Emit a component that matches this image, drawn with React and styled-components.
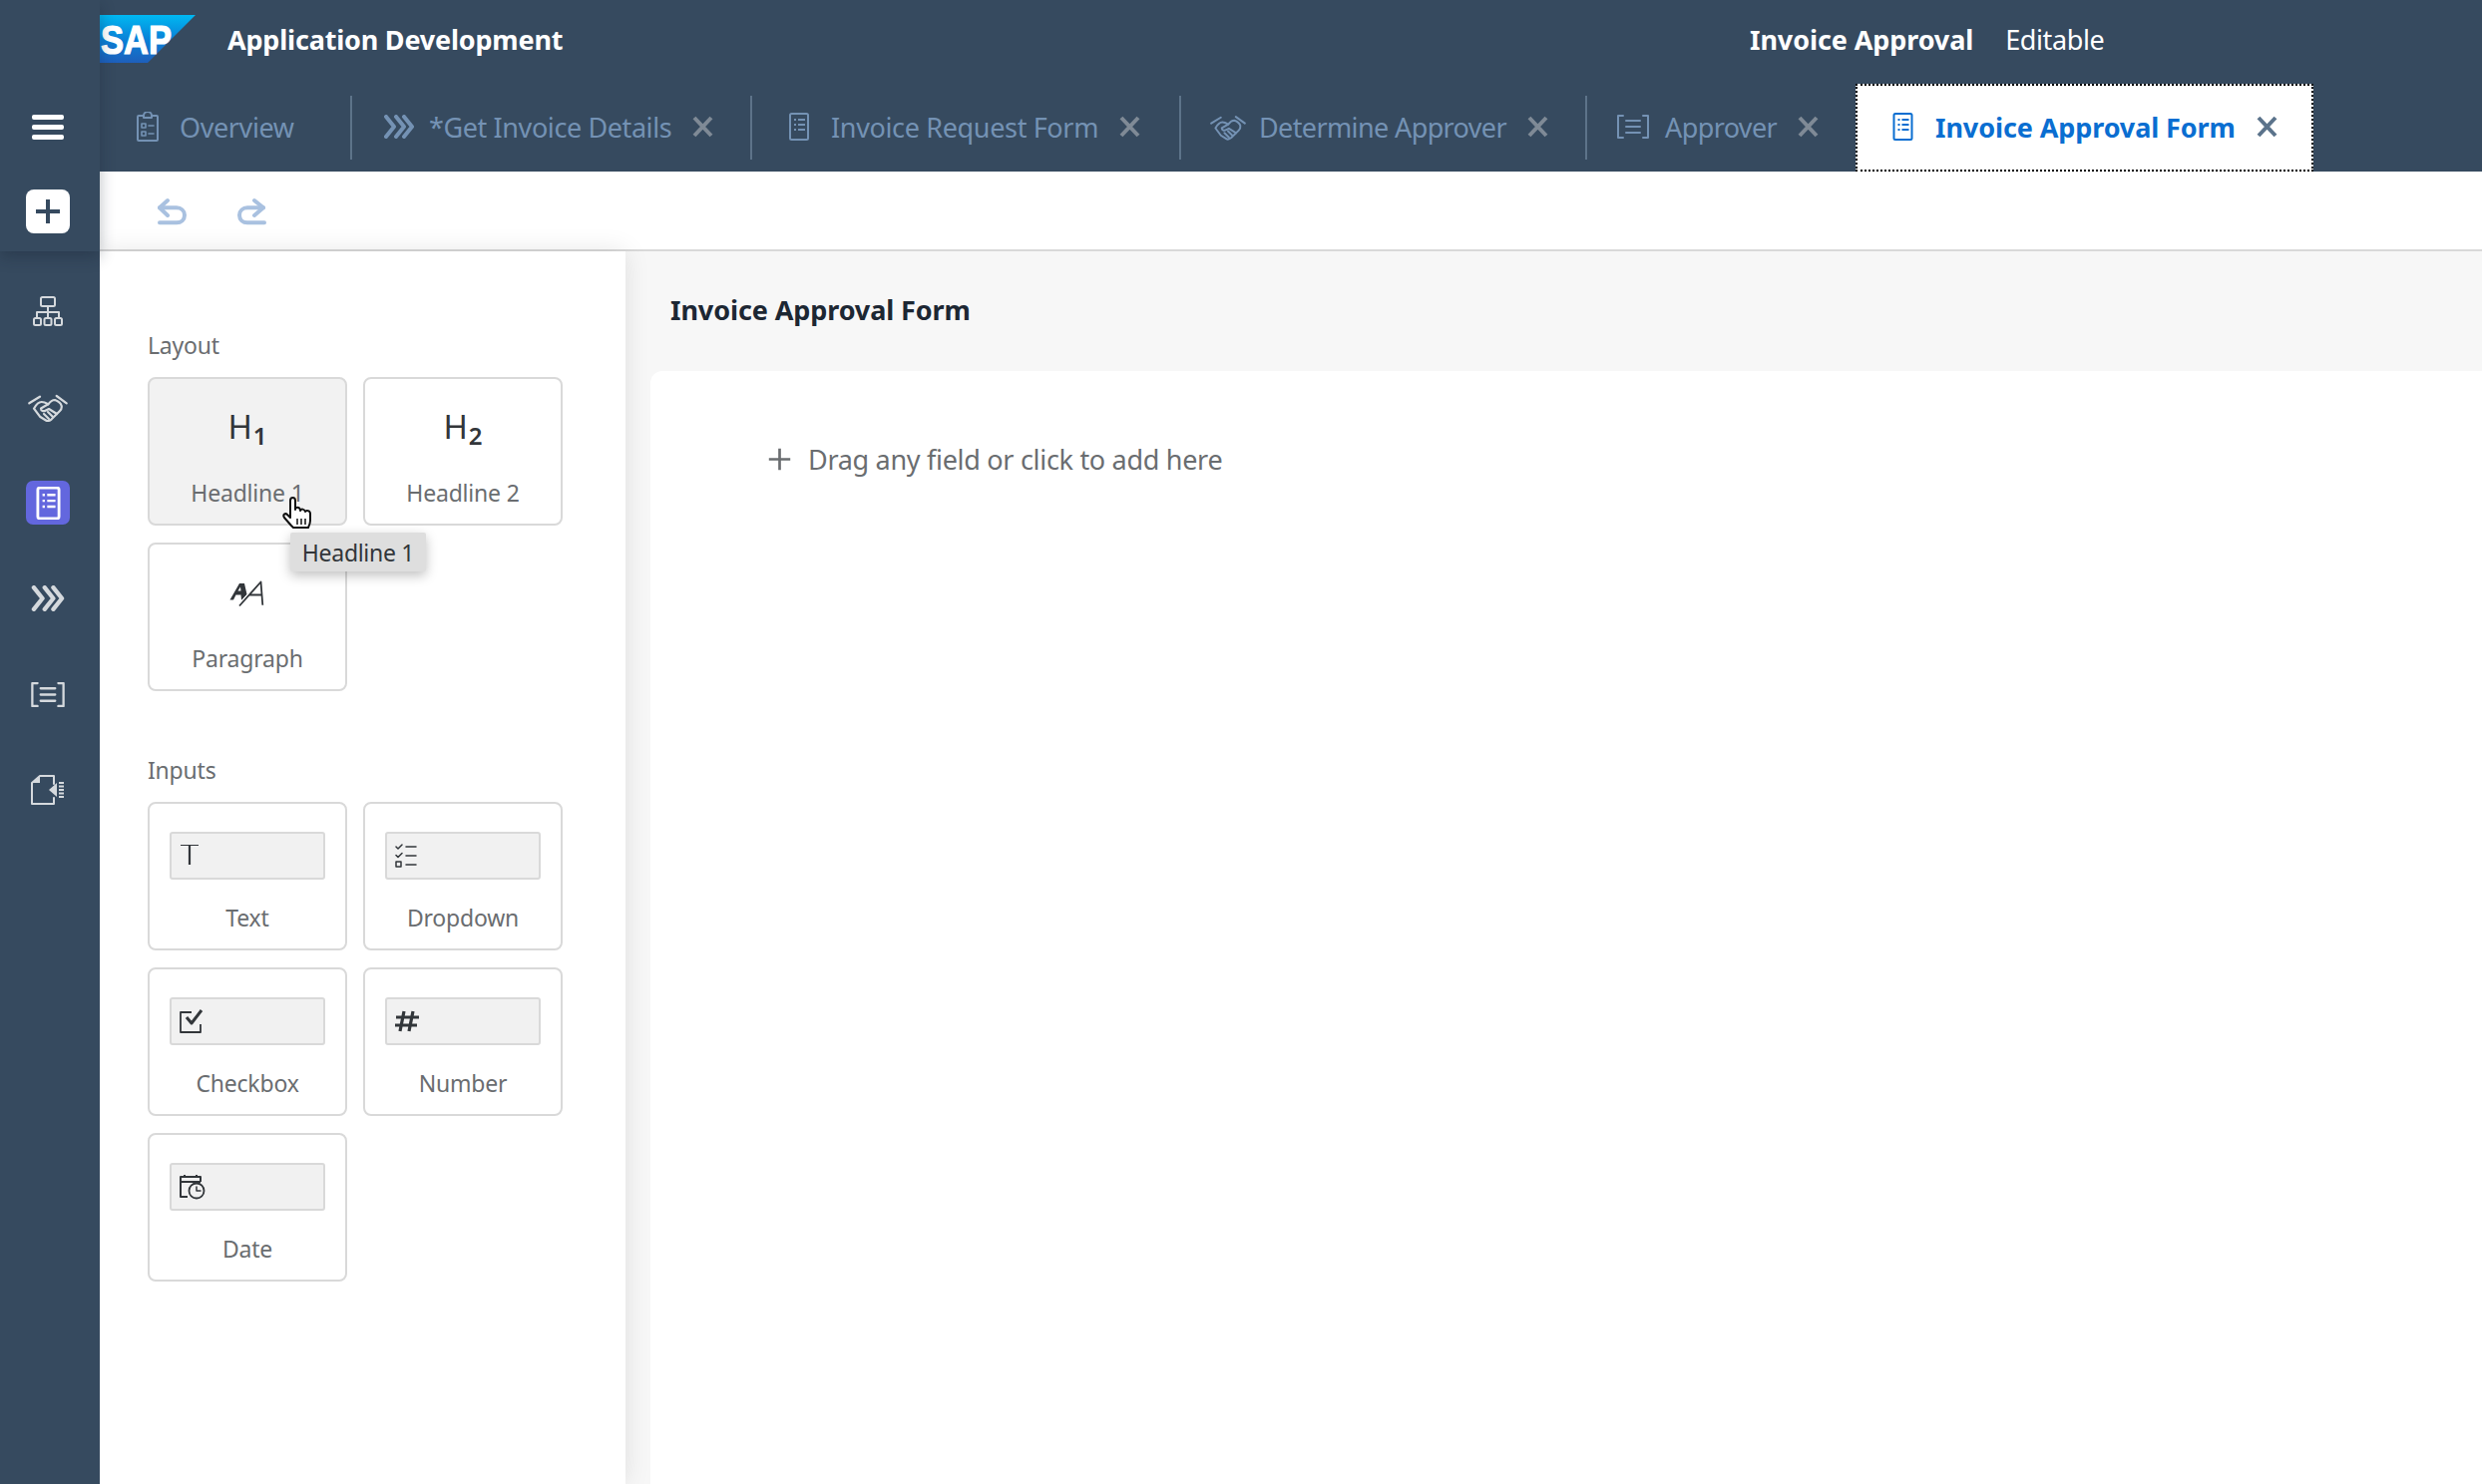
import React from "react";
import styled, { createGlobalStyle } from "styled-components";

const GlobalStyle = createGlobalStyle`
  html, body {
    margin: 0;
    padding: 0;
    background: #fff;
  }
  body {
    font-family: "Noto Sans", "Open Sans", sans-serif;
  }
`;

const Page = styled.div`
  display: flex;
  width: 2488px;
  height: 1488px;
  overflow: hidden;
`;

const Sidebar = styled.aside`
  width: 100px;
  flex: none;
  display: flex;
  flex-direction: column;
  background: #364a5f;
  color: #d5d9dd;
  position: relative;
  z-index: 1;
`;
const SideTop = styled.div`
  height: 252px;
  display: flex;
  flex-direction: column;
  align-items: center;
  padding: 115px 4px 0 0;
  box-sizing: border-box;
  box-shadow: 0 6px 14px rgba(20, 30, 45, 0.3);
`;
const Burger = styled.div`
  width: 32px;
  height: 25px;
  display: flex;
  flex-direction: column;
  justify-content: space-between;
  & > i {
    height: 5px;
    border-radius: 2px;
    background: #fff;
  }
`;
const AddButton = styled.div`
  width: 44px;
  height: 44px;
  margin-top: 50px;
  border-radius: 8px;
  background: #fff;
  color: #364a5f;
  display: flex;
  align-items: center;
  justify-content: center;
`;
const SideNav = styled.nav`
  display: flex;
  flex-direction: column;
  align-items: center;
  padding: 38px 4px 0 0;
  gap: 52px;
`;
const SideItem = styled.div`
  width: 44px;
  height: 44px;
  border-radius: 7px;
  display: flex;
  align-items: center;
  justify-content: center;
  background: ${(p) => (p.$active ? "#6367de" : "transparent")};
  color: ${(p) => (p.$active ? "#fff" : "#d5d9dd")};
`;

const Main = styled.div`
  flex: 1;
  min-width: 0;
  display: flex;
  flex-direction: column;
`;
const Header = styled.header`
  background: #364a5f;
  height: 172px;
  flex: none;
`;
const TitleRow = styled.div`
  height: 84px;
  display: grid;
  grid-template-columns: 1654px 1fr;
  align-items: center;
  padding-bottom: 6px;
  box-sizing: border-box;
`;
const Brand = styled.div`
  display: flex;
  align-items: center;
  gap: 32px;
`;
const AppName = styled.div`
  color: #fff;
  font-size: 27px;
  font-weight: 700;
  letter-spacing: -0.2px;
`;
const DocInfo = styled.div`
  display: flex;
  align-items: center;
  gap: 32px;
  color: #fff;
  font-size: 27px;
  letter-spacing: -0.4px;
`;
const DocName = styled.span`
  font-weight: 700;
  letter-spacing: -0.1px;
`;
const Tabs = styled.div`
  height: 88px;
  display: flex;
  align-items: center;
`;
const Tab = styled.div`
  height: 88px;
  box-sizing: border-box;
  width: ${(p) => p.$width}px;
  padding-left: ${(p) => p.$left}px;
  padding-bottom: 2px;
  display: flex;
  align-items: center;
  color: ${(p) => (p.$active ? "#0a6ed1" : "#7492b4")};
  font-size: 27px;
  font-weight: ${(p) => (p.$active ? 700 : 400)};
  letter-spacing: ${(p) => p.$tracking}px;
  white-space: nowrap;
  background: ${(p) => (p.$active ? "#fff" : "transparent")};
  border: ${(p) => (p.$active ? "2px dotted #000" : "none")};
  flex: none;
`;
const TabGlyph = styled.span`
  display: flex;
  margin-right: ${(p) => p.$gap}px;
`;
const TabClose = styled.span`
  display: flex;
  margin-left: 21px;
  color: ${(p) => (p.$active ? "#5b738b" : "#7f8a96")};
`;
const TabDivider = styled.div`
  width: 2px;
  height: 64px;
  flex: none;
  background: #5d7389;
`;

const Toolbar = styled.div`
  height: 80px;
  flex: none;
  box-sizing: border-box;
  display: flex;
  align-items: center;
  gap: 49px;
  padding: 2px 0 0 58px;
  background: #fff;
  border-bottom: 2px solid #d9d9d9;
  color: #a9c1e0;
`;
const Body = styled.div`
  flex: 1;
  min-height: 0;
  display: flex;
  background: #f7f7f7;
`;
const Palette = styled.section`
  width: 527px;
  flex: none;
  box-sizing: border-box;
  padding: 79px 0 0 48px;
  background: #fff;
  box-shadow: 0 0 24px rgba(0, 0, 0, 0.1);
  position: relative;
`;
const GroupLabel = styled.div`
  color: #6a6d70;
  font-size: 23px;
  line-height: 30px;
  margin-bottom: 17px;
  letter-spacing: -0.2px;
`;
const CardGrid = styled.div`
  display: grid;
  grid-template-columns: 200px 200px;
  grid-auto-rows: 149px;
  gap: 17px 16px;
  margin-bottom: 64px;
`;
const Card = styled.div`
  position: relative;
  box-sizing: border-box;
  border: 2px solid #d9d9d9;
  border-radius: 8px;
  background: ${(p) => (p.$hover ? "#f2f2f2" : "#fff")};
  display: flex;
  flex-direction: column;
  align-items: center;
`;
const CardGlyph = styled.div`
  height: 99px;
  width: 100%;
  padding-bottom: 5px;
  box-sizing: border-box;
  display: flex;
  align-items: center;
  justify-content: center;
  color: #32363a;
`;
const Heading = styled.span`
  font-size: 33px;
  line-height: 1;
  font-weight: 400;
  & > sub {
    font-size: 24px;
    font-weight: 600;
    vertical-align: -6px;
    margin-left: 1px;
    line-height: 0;
  }
`;
const FieldBox = styled.div`
  width: 156px;
  height: 48px;
  margin-top: 28px;
  flex: none;
  box-sizing: border-box;
  border: 2px solid #d9d9d9;
  border-radius: 3px;
  background: #f1f1f1;
  color: #32363a;
  display: flex;
  align-items: center;
  padding-left: 8px;
`;
const CardLabel = styled.div`
  color: #6a6d70;
  font-size: 23px;
  line-height: 30px;
  letter-spacing: -0.2px;
  margin-top: ${(p) => (p.$field ? "23px" : "0")};
`;
const HandCursor = styled.svg`
  position: absolute;
  left: 133px;
  top: 118px;
  z-index: 3;
`;
const Tip = styled.div`
  position: absolute;
  left: 141px;
  top: 154px;
  z-index: 2;
  width: 136px;
  height: 39px;
  box-sizing: border-box;
  display: flex;
  align-items: center;
  justify-content: center;
  background: #dedede;
  border-radius: 2px;
  color: #32363a;
  font-size: 23px;
  letter-spacing: -0.3px;
  white-space: nowrap;
  box-shadow: 0 4px 12px rgba(0, 0, 0, 0.25);
`;
const Canvas = styled.section`
  flex: 1;
  min-width: 0;
  padding-left: 25px;
  display: flex;
  flex-direction: column;
`;
const FormTitle = styled.h2`
  margin: 0;
  height: 120px;
  flex: none;
  box-sizing: border-box;
  padding: 0 0 3px 20px;
  display: flex;
  align-items: center;
  color: #1d2733;
  font-size: 27px;
  font-weight: 700;
  letter-spacing: -0.1px;
`;
const Sheet = styled.div`
  flex: 1;
  background: #fff;
  border-radius: 12px 0 0 0;
  padding: 66px 0 0 117px;
`;
const DropHint = styled.div`
  display: flex;
  align-items: center;
  gap: 16px;
  height: 44px;
  color: #6a6d70;
  font-size: 27px;
  letter-spacing: -0.3px;
`;

const line = { fill: "none", stroke: "currentColor", strokeLinecap: "round", strokeLinejoin: "round" };

const PlusIcon = ({ size = 28, w = 4 }) => (
  <svg width={size} height={size} viewBox="0 0 28 28">
    <path d="M14 2v24M2 14h24" {...line} strokeLinecap="butt" strokeWidth={w} />
  </svg>
);
const CloseIcon = () => (
  <svg width="21" height="22" viewBox="0 0 21 22">
    <path d="M2 2l17 18M19 2L2 20" {...line} strokeLinecap="butt" strokeWidth="4" />
  </svg>
);
const FormIcon = ({ w = 20, h = 28, sw = 2 }) => (
  <svg width={w} height={h} viewBox="0 0 20 28">
    <rect x="1" y="1" width="18" height="26" rx="1.5" {...line} strokeWidth={sw} />
    <path d="M5 7h2M9 7h7M5 12h2M9 12h7M5 17h2M9 17h7" {...line} strokeLinecap="butt" strokeWidth="2" />
  </svg>
);
const ClipboardIcon = () => (
  <svg width="22" height="30" viewBox="0 0 22 30">
    <path d="M7 4H2a1 1 0 0 0-1 1v23a1 1 0 0 0 1 1h18a1 1 0 0 0 1-1V5a1 1 0 0 0-1-1h-5" {...line} strokeWidth="2" />
    <path d="M7 6V4a4 4 0 0 1 8 0v2z" {...line} strokeWidth="2" />
    <path d="M5 12h4v4H5zM5 20h4v4H5zM12 14h5M12 22h5" {...line} strokeWidth="1.6" />
  </svg>
);
const ChevronsIcon = ({ w = 30, h = 24, sw = 4 }) => (
  <svg width={w} height={h} viewBox="0 0 30 24">
    <path d="M2 2l8 10-8 10M12 2l8 10-8 10M20 2l8 10-8 10" {...line} strokeWidth={sw} />
  </svg>
);
const HandshakeIcon = ({ w = 36, h = 30, sw = 2.2 }) => (
  <svg width={w} height={h} viewBox="0 0 40 30">
    <path d="M1.300 11.300L12 4.700M28.700 4l10 7.300" {...line} strokeWidth={sw} />
    <path
      d="M6 16.700C8 13 11 10 13.700 10c2.300 0 4.300 1 6.600 2.300C22 10 25 8 27 8c3 1 6 3.500 6.700 6 .3 2-.7 4-1.700 5l-8.300 8.300c-2.700 2.200-4.200 2.200-5.700 1.200L12 24.700z"
      {...line}
      strokeWidth={sw}
    />
    <path d="M20.300 12.300L13 16.500c0 2.500 2.500 3.500 5 2l3-1.500 8 5" {...line} strokeWidth={sw} />
    <path d="M16 22l5 5M20 20l5 5" {...line} strokeWidth={sw} />
  </svg>
);
const BracketsIcon = ({ w = 32, h = 24, sw = 2 }) => (
  <svg width={w} height={h} viewBox="0 0 32 24">
    <path d="M6 1H1v22h5M26 1h5v22h-5" {...line} strokeWidth={sw} />
    <path d="M9 6h14M9 12h14M9 18h14" {...line} strokeWidth={sw} />
  </svg>
);
const NetworkIcon = () => (
  <svg width="30" height="30" viewBox="0 0 30 30">
    <rect x="8" y="1" width="14" height="9" rx="1.5" {...line} strokeWidth="2" />
    <path d="M15 10v12M4 21v-5h22v5" {...line} strokeWidth="2" />
    <rect x="1" y="22" width="7" height="7" rx="1.5" {...line} strokeWidth="2" />
    <rect x="11.5" y="22" width="7" height="7" rx="1.5" {...line} strokeWidth="2" />
    <rect x="22" y="22" width="7" height="7" rx="1.5" {...line} strokeWidth="2" />
  </svg>
);
const ImportIcon = () => (
  <svg width="34" height="32" viewBox="0 0 34 32">
    <path d="M23 10V2H9L1 9v21h22v-6" {...line} strokeWidth="2" />
    <path d="M9 2v7H1z" fill="currentColor" />
    <path d="M18 16l8-7v14z" fill="currentColor" />
    <path d="M28 9h5M28 12.5h5M28 16h5M28 19.5h5M28 23h5" {...line} strokeLinecap="butt" strokeWidth="2" />
  </svg>
);
const UndoIcon = () => (
  <svg width="30" height="28" viewBox="8 8 30 28">
    <path d="M18 11l-8 7.300 8 7.700" {...line} strokeWidth="4" />
    <path d="M10 18.300h17c4.500 0 8 3 8 7.500s-3.500 7.500-8 7.500H10" {...line} strokeWidth="4" />
  </svg>
);
const RedoIcon = () => (
  <svg width="30" height="28" viewBox="87 8 30 28">
    <path d="M105 11l9 7.300-9 7.700" {...line} strokeWidth="4" />
    <path d="M114 18.300H98c-4.500 0-8 3-8 7.500s3.500 7.500 8 7.500h17" {...line} strokeWidth="4" />
  </svg>
);
const SapLogo = () => (
  <svg width="96" height="48" viewBox="0 0 96 48">
    <defs>
      <linearGradient id="sapFill" x1="0" y1="0" x2="0" y2="1">
        <stop offset="0" stopColor="#00b8f1" />
        <stop offset="0.5" stopColor="#0a82d8" />
        <stop offset="1" stopColor="#1e5fbb" />
      </linearGradient>
    </defs>
    <path d="M0 0h96L48 48H0z" fill="url(#sapFill)" />
    <text
      x="1"
      y="39"
      textLength="71"
      lengthAdjust="spacingAndGlyphs"
      fontFamily="Liberation Sans, sans-serif"
      fontWeight="700"
      fontSize="40"
      fill="#fff"
      stroke="#fff"
      strokeWidth="1.2"
    >
      SAP
    </text>
  </svg>
);
const ParagraphIcon = () => (
  <svg width="40" height="34" viewBox="8 2 40 34">
    <path d="M10.500 27.500L20 11h5l2.500 11-5 5.500h-.5l-.5-5h-5l-2.500 5zM18.500 18.500h3l-.5-4z" fill="currentColor" fillRule="evenodd" />
    <path d="M20 33.500L41.500 9.500" fill="none" stroke="#fff" strokeWidth="4" />
    <path d="M20 33.500L41.500 9.500l1.800 23.200M30 22.500h12.500" {...line} strokeLinecap="butt" strokeWidth="1.8" />
  </svg>
);
const TextFieldIcon = () => (
  <svg width="20" height="22" viewBox="0 2 20 22">
    <path d="M1 2h18M10 2v20" {...line} strokeLinecap="butt" strokeWidth="2.2" />
  </svg>
);
const ChecklistIcon = () => (
  <svg width="24" height="24" viewBox="0 0 24 24">
    <path d="M1 3l2 2 4-4M1 11.5l2 2 4-4" {...line} strokeWidth="1.5" />
    <rect x="1" y="18" width="5" height="5" {...line} strokeWidth="1.5" />
    <path d="M11 3h10M11 12h10M11 21h10" {...line} strokeWidth="1.5" />
  </svg>
);
const CheckboxIcon = () => (
  <svg width="24" height="24" viewBox="0 0 24 24">
    <path d="M12 3H1v20h20v-8" {...line} strokeLinecap="butt" strokeWidth="1.8" />
    <path d="M7 8l5 6 10-13" {...line} strokeLinecap="butt" strokeWidth="3" />
  </svg>
);
const HashIcon = () => (
  <svg width="24" height="22" viewBox="0 0 24 22">
    <path d="M9 1L5 21M18 1l-4 20M1 7h23M0 15h22" {...line} strokeLinecap="butt" strokeWidth="3.2" />
  </svg>
);
const DateIcon = () => (
  <svg width="26" height="26" viewBox="0 0 26 26">
    <path d="M8 23H1V3h20v5M1 8h20M5 1v3M17 1v3" {...line} strokeLinecap="butt" strokeWidth="2" />
    <circle cx="17" cy="17" r="7.5" {...line} strokeWidth="1.8" />
    <path d="M17 13v4h4" {...line} strokeWidth="1.5" />
  </svg>
);
const Hand = () => (
  <HandCursor width="32" height="34" viewBox="0 0 32 34">
    <path
      d="M9 29L2 21c-2-3 1-5 3-3l3 3V4c0-4 5-4 5 0v9c0-3 4-3 5 0v1c1-2 4-2 5 1 1-2 5-1 5 2v7c0 3-1 5-2 7H11z"
      fill="#fff"
      stroke="#111"
      strokeWidth="2"
      strokeLinejoin="round"
    />
    <path d="M15 22v6M19 22v6M23 22v6" stroke="#111" strokeWidth="1.5" fill="none" />
  </HandCursor>
);

const tabs = [
  { name: "Overview", icon: <ClipboardIcon />, width: 251, left: 37, gap: 21, tracking: -0.4, closable: false },
  { name: "*Get Invoice Details", icon: <ChevronsIcon />, width: 399, left: 32, gap: 15, tracking: -0.4, closable: true },
  { name: "Invoice Request Form", icon: <FormIcon />, width: 428, left: 37, gap: 22, tracking: -0.35, closable: true },
  { name: "Determine Approver", icon: <HandshakeIcon />, width: 405, left: 29, gap: 13, tracking: -0.62, closable: true },
  { name: "Approver", icon: <BracketsIcon />, width: 269, left: 30, gap: 16, tracking: -0.6, closable: true },
];

const layoutCards = [
  { label: "Headline 1", glyph: <Heading>H<sub>1</sub></Heading>, hover: true },
  { label: "Headline 2", glyph: <Heading>H<sub>2</sub></Heading> },
  { label: "Paragraph", glyph: <ParagraphIcon /> },
];
const inputCards = [
  { label: "Text", icon: <TextFieldIcon /> },
  { label: "Dropdown", icon: <ChecklistIcon /> },
  { label: "Checkbox", icon: <CheckboxIcon /> },
  { label: "Number", icon: <HashIcon /> },
  { label: "Date", icon: <DateIcon /> },
];

export default function App() {
  return (
    <Page>
      <GlobalStyle />
      <Sidebar>
        <SideTop>
          <Burger>
            <i />
            <i />
            <i />
          </Burger>
          <AddButton>
            <PlusIcon />
          </AddButton>
        </SideTop>
        <SideNav>
          <SideItem><NetworkIcon /></SideItem>
          <SideItem><HandshakeIcon w={40} h={30} /></SideItem>
          <SideItem $active><FormIcon w={25} h={33} sw={2.4} /></SideItem>
          <SideItem><ChevronsIcon w={34} h={26} /></SideItem>
          <SideItem><BracketsIcon w={34} h={25} sw={2.2} /></SideItem>
          <SideItem><ImportIcon /></SideItem>
        </SideNav>
      </Sidebar>
      <Main>
        <Header>
          <TitleRow>
            <Brand>
              <SapLogo />
              <AppName>Application Development</AppName>
            </Brand>
            <DocInfo>
              <DocName>Invoice Approval</DocName>
              <span>Editable</span>
            </DocInfo>
          </TitleRow>
          <Tabs>
            {tabs.map((t, i) => (
              <React.Fragment key={t.name}>
                <Tab $width={t.width} $left={t.left} $tracking={t.tracking}>
                  <TabGlyph $gap={t.gap}>{t.icon}</TabGlyph>
                  {t.name}
                  {t.closable && (
                    <TabClose>
                      <CloseIcon />
                    </TabClose>
                  )}
                </Tab>
                {i < tabs.length - 1 && <TabDivider />}
              </React.Fragment>
            ))}
            <Tab $active $width={459} $left={35} $tracking={-0.1}>
              <TabGlyph $gap={22}>
                <FormIcon w={21} h={28} />
              </TabGlyph>
              Invoice Approval Form
              <TabClose $active>
                <CloseIcon />
              </TabClose>
            </Tab>
          </Tabs>
        </Header>
        <Toolbar>
          <UndoIcon />
          <RedoIcon />
        </Toolbar>
        <Body>
          <Palette>
            <GroupLabel>Layout</GroupLabel>
            <CardGrid>
              {layoutCards.map((c) => (
                <Card key={c.label} $hover={c.hover}>
                  <CardGlyph>{c.glyph}</CardGlyph>
                  <CardLabel>{c.label}</CardLabel>
                  {c.hover && (
                    <>
                      <Hand />
                      <Tip>Headline 1</Tip>
                    </>
                  )}
                </Card>
              ))}
            </CardGrid>
            <GroupLabel>Inputs</GroupLabel>
            <CardGrid>
              {inputCards.map((c) => (
                <Card key={c.label}>
                  <FieldBox>{c.icon}</FieldBox>
                  <CardLabel $field>{c.label}</CardLabel>
                </Card>
              ))}
            </CardGrid>
          </Palette>
          <Canvas>
            <FormTitle>Invoice Approval Form</FormTitle>
            <Sheet>
              <DropHint>
                <PlusIcon size={25} w={3} />
                Drag any field or click to add here
              </DropHint>
            </Sheet>
          </Canvas>
        </Body>
      </Main>
    </Page>
  );
}
